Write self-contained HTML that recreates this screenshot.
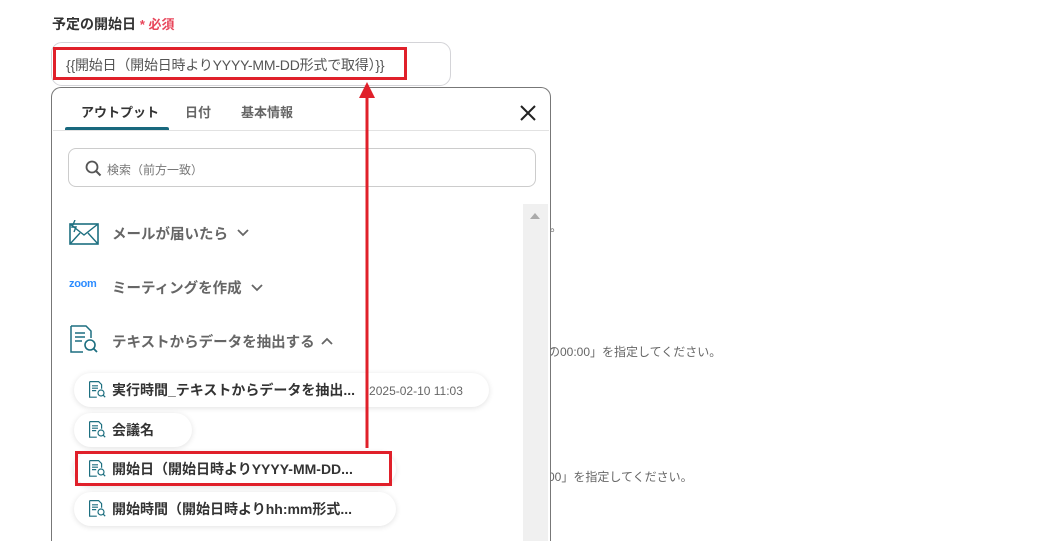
<!DOCTYPE html>
<html style="width:1038px;height:541px;overflow:hidden"><head><meta charset="utf-8"><style>
*{box-sizing:border-box;margin:0;padding:0}
body{width:1038px;height:541px;overflow:hidden;background:#fff;font-family:"Liberation Sans","Noto Sans CJK JP",sans-serif;position:relative;color:#333}
.a{position:absolute;white-space:nowrap}
.pill{position:absolute;background:#fff;border-radius:17px;box-shadow:0 1px 6px rgba(0,0,0,.12);height:34px;font-size:14px;font-weight:bold;color:#333;line-height:34px;padding-left:38px}
.pill svg{position:absolute;left:15px;top:8px}
.grp{font-size:14.5px;font-weight:bold;color:#666}
</style></head><body>
<div class="a" style="left:52px;top:14px;font-size:14px;font-weight:bold;color:#333">予定の開始日 <span style="color:#e8455a;font-size:13px">* 必須</span></div>
<div class="a" style="left:51px;top:42px;width:400px;height:44px;border:1px solid #d4d4d8;border-radius:11px"></div>
<div class="a" style="left:53px;top:47px;width:354px;height:33px;border:3px solid #e0202a"></div>
<div class="a" style="left:66px;top:55px;font-size:14px;color:#555;letter-spacing:-.2px">{{開始日（開始日時よりYYYY-MM-DD形式で取得）}}</div>
<div class="a" style="left:550px;top:218px;font-size:12px;color:#666">。</div>
<div class="a" style="left:548px;top:343px;font-size:12px;color:#666">の00:00」を指定してください。</div>
<div class="a" style="left:548px;top:468px;font-size:12px;color:#666">00」を指定してください。</div>
<div class="a" style="left:51px;top:87px;width:500px;height:454px;border:1px solid #777;border-bottom:none;border-radius:10px 10px 0 0;background:#fff;overflow:hidden">
 <div class="a" style="left:29px;top:14px;font-size:13px;font-weight:bold;color:#333">アウトプット</div>
 <div class="a" style="left:133px;top:14px;font-size:13px;font-weight:bold;color:#666">日付</div>
 <div class="a" style="left:189px;top:14px;font-size:13px;font-weight:bold;color:#666">基本情報</div>
 <div class="a" style="left:13px;top:39px;width:104px;height:4px;background:#18687e;border-radius:2px 2px 0 0"></div>
 <div class="a" style="left:1px;top:42px;width:496px;height:1px;background:#e2e2e2"></div>
 <svg class="a" style="left:467px;top:16px" width="18" height="18" viewBox="0 0 18 18"><path d="M2 2L16 16M16 2L2 16" stroke="#222" stroke-width="2"/></svg>
 <div class="a" style="left:16px;top:60px;width:468px;height:39px;border:1px solid #ccc;border-radius:8px"></div>
 <svg class="a" style="left:33px;top:72px" width="17" height="17" viewBox="0 0 17 17"><circle cx="7" cy="7" r="5.5" fill="none" stroke="#555" stroke-width="1.8"/><path d="M11 11L15.5 15.5" stroke="#555" stroke-width="2"/></svg>
 <div class="a" style="left:55px;top:73px;font-size:12px;color:#777">検索（前方一致）</div>
 <div class="a" style="left:471px;top:116px;width:25px;height:338px;background:#f0f0f0"></div>
 <svg class="a" style="left:477px;top:124px" width="12" height="8"><path d="M1 7L6 1L11 7Z" fill="#aaa"/></svg>
 <svg class="a" style="left:17px;top:132px" width="30" height="26" viewBox="0 0 30 26"><rect x="1" y="4" width="28" height="20" fill="none" stroke="#1d6f80" stroke-width="1.6"/><path d="M1 4L15 15L29 4M1 24L11 13M29 24L19 13" fill="none" stroke="#1d6f80" stroke-width="1.4"/><path d="M6 0L3 7H7L5 12" fill="none" stroke="#1d6f80" stroke-width="1.4"/></svg>
 <div class="a grp" style="left:60px;top:135px">メールが届いたら</div>
 <svg class="a" style="left:185px;top:141px" width="12" height="8"><path d="M1 1L6 6L11 1" fill="none" stroke="#666" stroke-width="1.8"/></svg>
 <div class="a" style="left:17px;top:190px;font-size:11px;font-weight:bold;color:#2d8cff;letter-spacing:-.3px">zoom</div>
 <div class="a grp" style="left:60px;top:189px">ミーティングを作成</div>
 <svg class="a" style="left:199px;top:196px" width="12" height="8"><path d="M1 1L6 6L11 1" fill="none" stroke="#666" stroke-width="1.8"/></svg>
 <svg class="a" style="left:18px;top:237px" width="30" height="30" viewBox="0 0 30 30"><path d="M1 1H16L21 6V13M1 1V27H13" fill="none" stroke="#1d6f80" stroke-width="1.5"/><path d="M5 8H15M5 12H15M5 16H12" stroke="#1d6f80" stroke-width="1.4"/><circle cx="20" cy="20" r="5" fill="none" stroke="#1d6f80" stroke-width="1.6"/><path d="M23.5 23.5L27 27" stroke="#1d6f80" stroke-width="1.8"/></svg>
 <div class="a grp" style="left:60px;top:243px">テキストからデータを抽出する</div>
 <svg class="a" style="left:269px;top:249px" width="12" height="8"><path d="M1 7L6 2L11 7" fill="none" stroke="#666" stroke-width="1.8"/></svg>
</div>
<div class="pill" style="left:74px;top:373px;width:415px">実行時間_テキストからデータを抽出...<span style="font-weight:normal;color:#666;font-size:12px;margin-left:14px">2025-02-10 11:03</span><svg width="18" height="18" viewBox="0 0 30 30"><path d="M1 1H16L21 6V13M1 1V27H13" fill="none" stroke="#1d6f80" stroke-width="2"/><path d="M5 8H15M5 12H15M5 16H12" stroke="#1d6f80" stroke-width="2"/><circle cx="20" cy="20" r="5" fill="none" stroke="#1d6f80" stroke-width="2"/><path d="M23.5 23.5L27 27" stroke="#1d6f80" stroke-width="2"/></svg></div>
<div class="pill" style="left:74px;top:413px;width:118px">会議名<svg width="18" height="18" viewBox="0 0 30 30"><path d="M1 1H16L21 6V13M1 1V27H13" fill="none" stroke="#1d6f80" stroke-width="2"/><path d="M5 8H15M5 12H15M5 16H12" stroke="#1d6f80" stroke-width="2"/><circle cx="20" cy="20" r="5" fill="none" stroke="#1d6f80" stroke-width="2"/><path d="M23.5 23.5L27 27" stroke="#1d6f80" stroke-width="2"/></svg></div>
<div class="pill" style="left:74px;top:452px;width:322px">開始日（開始日時よりYYYY-MM-DD...<svg width="18" height="18" viewBox="0 0 30 30"><path d="M1 1H16L21 6V13M1 1V27H13" fill="none" stroke="#1d6f80" stroke-width="2"/><path d="M5 8H15M5 12H15M5 16H12" stroke="#1d6f80" stroke-width="2"/><circle cx="20" cy="20" r="5" fill="none" stroke="#1d6f80" stroke-width="2"/><path d="M23.5 23.5L27 27" stroke="#1d6f80" stroke-width="2"/></svg></div>
<div class="pill" style="left:74px;top:492px;width:322px">開始時間（開始日時よりhh:mm形式...<svg width="18" height="18" viewBox="0 0 30 30"><path d="M1 1H16L21 6V13M1 1V27H13" fill="none" stroke="#1d6f80" stroke-width="2"/><path d="M5 8H15M5 12H15M5 16H12" stroke="#1d6f80" stroke-width="2"/><circle cx="20" cy="20" r="5" fill="none" stroke="#1d6f80" stroke-width="2"/><path d="M23.5 23.5L27 27" stroke="#1d6f80" stroke-width="2"/></svg></div>
<div class="a" style="left:75px;top:451px;width:317px;height:35px;border:3px solid #e0202a"></div>
<svg class="a" style="left:355px;top:80px" width="24" height="370"><path d="M12 368V14" stroke="#e0202a" stroke-width="3"/><path d="M12 2L4 18H20Z" fill="#e0202a"/></svg>
</body></html>
